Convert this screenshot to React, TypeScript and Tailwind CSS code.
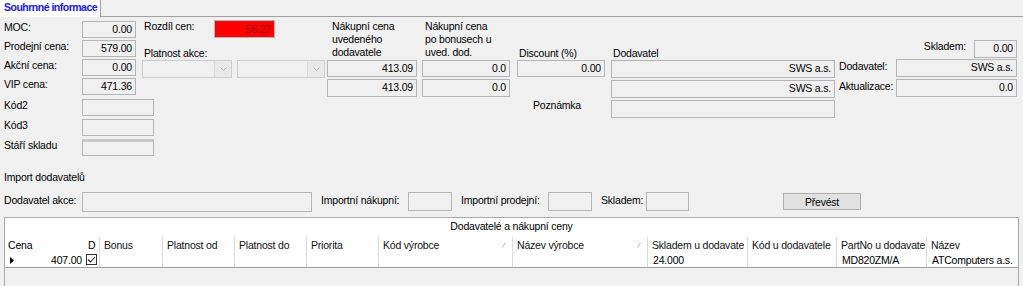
import React from 'react';

type BoxProps = { value?: string; className?: string };

function Box({ value = '', className = '' }: BoxProps) {
  return (
    <div className={`border border-[#b4b4b4] bg-[#f0f0f0] px-[3px] text-right leading-[15px] ${className}`}>
      {value}
    </div>
  );
}

function Combo({ className = '' }: { className?: string }) {
  return (
    <div className={`flex h-[18px] border border-[#cccccc] bg-[#f0f0f0] ${className}`}>
      <div className="flex-1" />
      <div className="flex w-[17px] items-center justify-center border-l border-[#d9d9d9] bg-[#e9e9e9]">
        <svg width="7" height="4" viewBox="0 0 7 4">
          <polyline points="0.5,0.5 3.5,3.5 6.5,0.5" fill="none" stroke="#b0b0b0" strokeWidth="1" />
        </svg>
      </div>
    </div>
  );
}

function SortMark() {
  return (
    <svg width="4" height="6" viewBox="0 0 4 6" className="absolute right-[6px] top-[5px]">
      <line x1="0.5" y1="5.5" x2="3.5" y2="0.5" stroke="#b8b8b8" strokeWidth="1" />
    </svg>
  );
}

const columns = [
  { title: 'Bonus', w: 'w-[63px]', value: '' },
  { title: 'Platnost od', w: 'w-[72px]', value: '' },
  { title: 'Platnost do', w: 'w-[72px]', value: '' },
  { title: 'Priorita', w: 'w-[72px]', value: '' },
  { title: 'Kód výrobce', w: 'w-[134px]', value: '', sort: true },
  { title: 'Název výrobce', w: 'w-[135px]', value: '', sort: true },
  { title: 'Skladem u dodavate', w: 'w-[100px]', value: '24.000' },
  { title: 'Kód u dodavatele', w: 'w-[89px]', value: '' },
  { title: 'PartNo u dodavate', w: 'w-[90px]', value: 'MD820ZM/A' },
  { title: 'Název', w: 'flex-1', value: 'ATComputers a.s.' },
];

export default function App() {
  const priceRows = [
    { label: 'MOC:', value: '0.00' },
    { label: 'Prodejní cena:', value: '579.00' },
    { label: 'Akční cena:', value: '0.00' },
    { label: 'VIP cena:', value: '471.36' },
  ];

  return (
    <div className="relative h-[286px] w-[1023px] overflow-hidden bg-[#f0f0f0] font-['Liberation_Sans',Arial,sans-serif] text-[10.5px] tracking-[-0.2px] text-black">
      {/* tab strip */}
      <div className="flex h-[17px]">
        <div className="h-[17px] w-[101px] border-r border-[#a0a0a0] bg-white pl-[4px] pt-[1px] text-[10.5px] font-bold leading-[13px] tracking-[-0.5px] text-[#1515ff]">
          Souhrnné informace
        </div>
        <div className="flex-1 border-b border-[#a0a0a0]" />
      </div>

      {/* summary */}
      <div className="flex h-[148px]">
        <div className="flex w-[327px] flex-col">
          <div className="flex h-[78px]">
            <div className="flex w-[142px] flex-col gap-[2px] pt-[4px]">
              {priceRows.map((r) => (
                <div key={r.label} className="flex h-[17px]">
                  <div className="w-[82px] pl-[4px] leading-[13px]">{r.label}</div>
                  <Box value={r.value} className="h-[17px] w-[54px]" />
                </div>
              ))}
            </div>
            <div className="flex flex-1 flex-col pt-[3px]">
              <div className="flex h-[18px]">
                <div className="w-[72px] pl-[2px] leading-[13px]">Rozdíl cen:</div>
                <div className="h-[18px] w-[61px] border border-[#b4b4b4] bg-[#ff0000] pr-[3px] text-right leading-[16px] text-[#9a0000]">
                  58.27
                </div>
              </div>
              <div className="mt-[9px] pl-[2px] leading-[13px]">Platnost akce:</div>
              <div className="flex gap-[5px]">
                <Combo className="w-[90px]" />
                <Combo className="w-[88px]" />
              </div>
            </div>
          </div>
          <div className="mt-[4px] flex flex-col gap-[3px]">
            {['Kód2', 'Kód3', 'Stáří skladu'].map((l) => (
              <div key={l} className="flex h-[17px]">
                <div className="w-[82px] pl-[4px] leading-[13px]">{l}</div>
                <Box
                  className={`h-[17px] w-[72px] ${l === 'Stáří skladu' ? 'border-t-[3px] border-t-[#c9c9c9]' : ''}`}
                />
              </div>
            ))}
          </div>
        </div>

        <div className="flex w-[90px] flex-col pt-[3px]">
          <div className="h-[39px] pl-[5px] leading-[13px]">
            Nákupní cena
            <br />
            uvedeného
            <br />
            dodavatele
          </div>
          <Box value="413.09" className="mt-[1px] h-[17px]" />
          <Box value="413.09" className="mt-[2px] h-[18px]" />
        </div>

        <div className="ml-[5px] flex w-[88px] flex-col pt-[3px]">
          <div className="h-[39px] pl-[3px] leading-[13px]">
            Nákupní cena
            <br />
            po bonusech u
            <br />
            uved. dod.
          </div>
          <Box value="0.0" className="mt-[1px] h-[17px]" />
          <Box value="0.0" className="mt-[2px] h-[18px]" />
        </div>

        <div className="ml-[7px] flex w-[88px] flex-col pt-[30px]">
          <div className="h-[13px] pl-[2px] leading-[13px]">Discount (%)</div>
          <Box value="0.00" className="h-[17px]" />
          <div className="mt-[22px] pl-[16px] leading-[13px]">Poznámka</div>
        </div>

        <div className="ml-[6px] flex w-[224px] flex-col gap-[2px] pt-[30px]">
          <div className="-mb-[1px] h-[12px] pl-[2px] leading-[13px]">Dodavatel</div>
          <Box value="SWS a.s." className="h-[18px]" />
          <Box value="SWS a.s." className="h-[18px]" />
          <Box className="h-[18px]" />
        </div>

        <div className="ml-[4px] flex w-[178px] flex-col pt-[23px]">
          <div className="flex h-[18px] justify-end">
            <div className="mr-[8px] leading-[13px]">Skladem:</div>
            <Box value="0.00" className="h-[18px] w-[43px]" />
          </div>
          <div className="mt-[1px] flex h-[18px]">
            <div className="w-[57px] pt-[1px] leading-[13px]">Dodavatel:</div>
            <Box value="SWS a.s." className="h-[18px] w-[121px]" />
          </div>
          <div className="mt-[2px] flex h-[18px]">
            <div className="w-[57px] pt-[1px] leading-[13px]">Aktualizace:</div>
            <Box value="0.0" className="h-[18px] w-[121px]" />
          </div>
        </div>
      </div>

      {/* import */}
      <div className="mt-[6px] pl-[4px] leading-[13px]">Import dodavatelů</div>
      <div className="mt-[8px] flex h-[20px] items-start">
        <div className="w-[82px] pl-[4px] pt-[2px] leading-[13px]">Dodavatel akce:</div>
        <Box className="h-[20px] w-[230px]" />
        <div className="ml-[9px] w-[87px] pt-[2px] leading-[13px]">Importní nákupní:</div>
        <Box className="h-[19px] w-[44px]" />
        <div className="ml-[9px] w-[87px] pt-[2px] leading-[13px]">Importní prodejní:</div>
        <Box className="h-[19px] w-[44px]" />
        <div className="ml-[9px] w-[45px] pt-[2px] leading-[13px]">Skladem:</div>
        <Box className="h-[19px] w-[43px]" />
        <button className="ml-[94px] mt-[1px] h-[17px] w-[78px] border border-[#adadad] bg-[#e1e1e1] text-center leading-[14px]">
          Převést
        </button>
      </div>

      {/* supplier grid */}
      <div className="ml-[4px] mt-[5px] flex h-[69px] w-[1015px] flex-col border-x border-t border-[#a9a9a9]">
        <div className="h-[19px] bg-white pt-[2px] text-center leading-[13px]">Dodavatelé a nákupní ceny</div>
        <div className="flex h-[31px] border-b border-[#a0a0a0] bg-white">
          <div className="flex w-[80px] flex-col">
            <div className="h-[17px] pl-[3px] pt-[2px] leading-[13px]">Cena</div>
            <div className="flex h-[13px] items-center">
              <svg width="4" height="7" viewBox="0 0 4 7" className="ml-[5px]">
                <polygon points="0,0 4,3.5 0,7" fill="#000" />
              </svg>
              <div className="flex-1 pr-[3px] text-right leading-[13px]">407.00</div>
            </div>
          </div>
          <div className="flex w-[14px] flex-col">
            <div className="h-[17px] pl-[3px] pt-[2px] leading-[13px]">D</div>
            <div className="ml-[1px] flex h-[11px] w-[11px] items-center justify-center border border-[#333333] bg-white">
              <svg width="9" height="7" viewBox="0 0 9 7">
                <polyline points="1,3.5 3.5,6 8,1" fill="none" stroke="#222" strokeWidth="1.1" />
              </svg>
            </div>
          </div>
          {columns.map((c) => (
            <div key={c.title} className={`relative flex flex-col border-l border-[#dadada] ${c.w}`}>
              <div className="h-[17px] pl-[4px] pt-[2px] leading-[13px] text-[#111]">{c.title}</div>
              {c.sort && <SortMark />}
              <div className="h-[13px] pl-[5px] leading-[13px]">{c.value}</div>
            </div>
          ))}
        </div>
        <div className="flex-1 bg-[#f0f0f0]" />
      </div>
    </div>
  );
}
